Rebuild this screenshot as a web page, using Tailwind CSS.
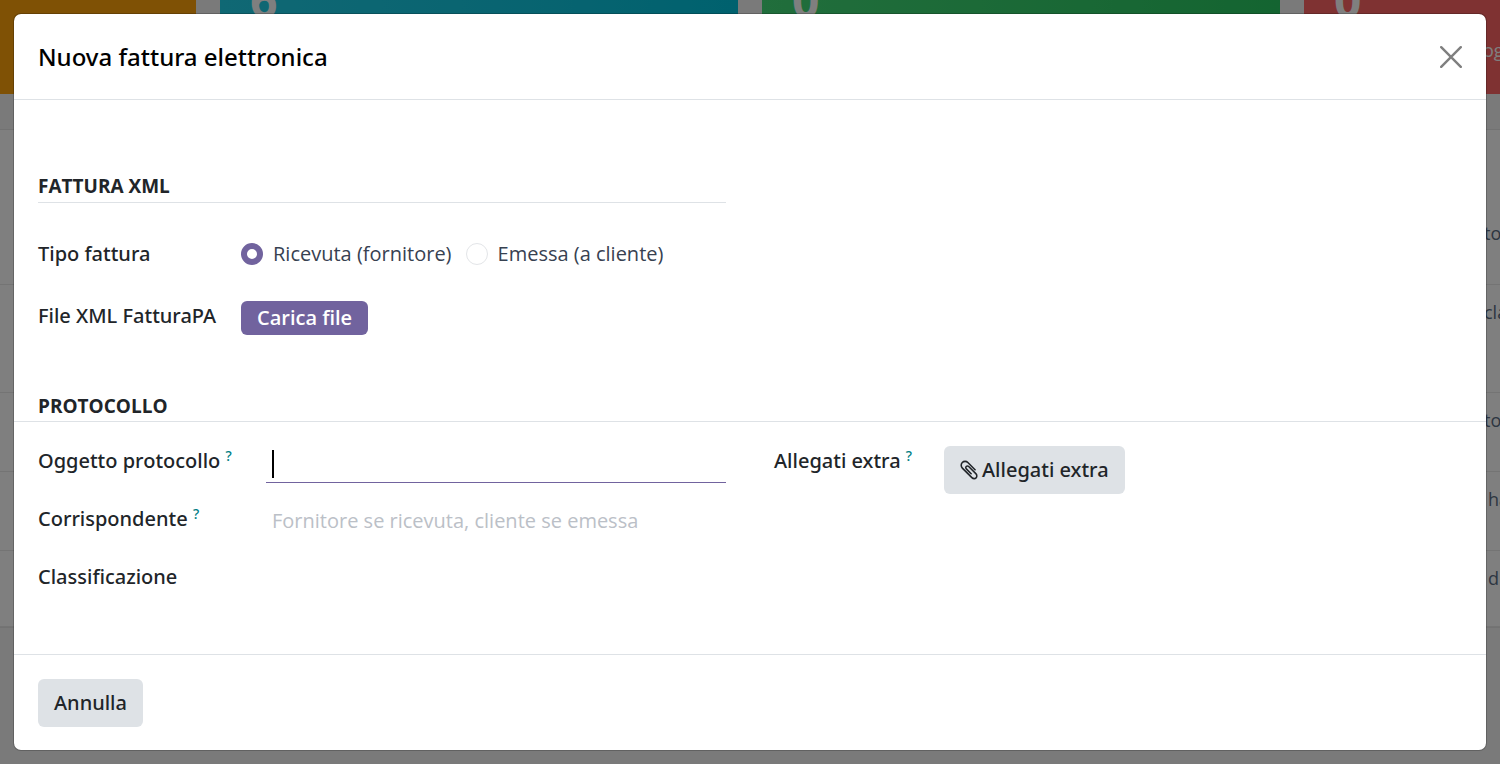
<!DOCTYPE html>
<html lang="it">
<head>
    <meta charset="UTF-8">
    <meta name="viewport" content="width=device-width, initial-scale=1.0">
    <title>Nuova fattura elettronica</title>
    <script src="https://cdn.jsdelivr.net/npm/@tailwindcss/browser@4"></script>
</head>
<body class="min-h-screen overflow-hidden bg-[#f5f5f5] font-['Open_Sans',sans-serif] text-[20px] leading-[30px] text-[#212529]">

    <!-- Dashboard behind the dialog -->
    <div class="absolute inset-0 flex justify-center overflow-hidden bg-[#f5f5f5]" aria-hidden="true">
        <div class="w-[2144px] shrink-0">
            <div class="grid h-[94px] grid-cols-4 gap-6 text-white">
                <div class="bg-[#ffa30a]"></div>
                <div class="bg-linear-to-r from-[#1fd0e8] to-[#00c3dd] px-[30px]">
                    <p class="-mt-[26px] text-[48px] leading-[52px] font-bold">6</p>
                </div>
                <div class="bg-linear-to-r from-[#42dc78] to-[#28c962] px-[30px]">
                    <p class="-mt-[26px] text-[48px] leading-[52px] font-bold">0</p>
                </div>
                <div class="bg-[#ff6464] px-[30px]">
                    <p class="-mt-[26px] text-[48px] leading-[52px] font-bold">0</p>
                    <p class="pt-[10px] pl-[149px] text-[18px] leading-7">oggi</p>
                </div>
            </div>
            <div class="h-9 border-b border-[#e4e4e4]"></div>
            <div class="border-b border-[#e4e4e4] bg-white text-[18px] text-[#5a6c84] *:grid *:grid-cols-[1fr_338px] *:border-b *:border-[#e8e8e8]">
                <div class="h-[155px] pt-[88px]"><span></span><span>to</span></div>
                <div class="h-[108px] pt-3"><span></span><span>cla</span></div>
                <div class="h-[79px] pt-3"><span></span><span>to</span></div>
                <div class="h-[79px] pt-3"><span></span><span class="pl-1">ha</span></div>
                <div class="h-[76px] pt-3"><span></span><span class="pl-1">d</span></div>
            </div>
        </div>
    </div>
    <div class="absolute inset-0 bg-black/50"></div>

    <!-- Dialog -->
    <div role="dialog" aria-labelledby="dialogTitle" class="relative m-[13px] rounded-lg border border-black/20 bg-white bg-clip-padding">
        <div class="flex items-center justify-between border-b border-[#dee2e6] px-6 py-6">
            <h1 id="dialogTitle" class="font-['Noto_Sans','Open_Sans',sans-serif] text-[24px] leading-[37px] font-medium text-black">Nuova fattura elettronica</h1>
            <button type="button" aria-label="Chiudi" class="cursor-pointer text-[#7f7f7f]">
                <svg class="size-[22px]" viewBox="0 0 22 22" fill="none" stroke="currentColor" stroke-width="2.4" stroke-linecap="round">
                    <path d="M1.2 1.2 20.8 20.8M20.8 1.2 1.2 20.8"/>
                </svg>
            </button>
        </div>

        <form id="invoiceForm">
            <div class="grid grid-cols-2 gap-12 px-6 pt-[71px]">
                <section>
                    <h2 class="border-b border-[#dee2e6] text-[19px] leading-[31px] font-bold">FATTURA XML</h2>
                    <div class="mt-9 flex items-center">
                        <span class="w-[203px] font-['Noto_Sans','Open_Sans',sans-serif] font-medium">Tipo fattura</span>
                        <div class="flex items-center gap-[14px] text-[#374151]">
                            <label class="flex items-center gap-[10px]">
                                <input type="radio" name="tipo" checked class="size-[22px] appearance-none rounded-full border border-[#e3e5e8] checked:border-[6px] checked:border-[#71639e]">
                                Ricevuta (fornitore)
                            </label>
                            <label class="flex items-center gap-[10px]">
                                <input type="radio" name="tipo" class="size-[22px] appearance-none rounded-full border border-[#e3e5e8] checked:border-[6px] checked:border-[#71639e]">
                                Emessa (a cliente)
                            </label>
                        </div>
                    </div>
                    <div class="mt-8 flex items-start">
                        <span class="w-[203px] font-['Noto_Sans','Open_Sans',sans-serif] font-medium">File XML FatturaPA</span>
                        <button type="button" class="h-[34px] cursor-pointer rounded-md bg-[#71639e] px-4 font-semibold text-white">Carica file</button>
                    </div>
                </section>
            </div>

            <h2 class="mt-14 border-b border-[#dee2e6] px-6 text-[19px] leading-[30px] font-bold">PROTOCOLLO</h2>
            <div class="grid grid-cols-2 gap-12 px-6 pt-6 pb-[55px]">
                <div class="grid auto-rows-[37px] grid-cols-[228px_1fr] gap-y-[21px]">
                    <label for="oggetto" class="font-['Noto_Sans','Open_Sans',sans-serif] font-medium">Oggetto protocollo <sup class="text-[14px] text-[#017e84]">?</sup></label>
                    <div class="relative">
                        <input id="oggetto" type="text" class="h-[37px] w-full border-b border-[#71639e] px-[6px] pb-1 caret-transparent outline-none">
                        <span class="absolute top-1 left-[6px] h-7 w-[2px] bg-black"></span>
                    </div>
                    <label for="corrispondente" class="font-['Noto_Sans','Open_Sans',sans-serif] font-medium">Corrispondente <sup class="text-[14px] text-[#017e84]">?</sup></label>
                    <input id="corrispondente" type="text" placeholder="Fornitore se ricevuta, cliente se emessa" class="h-[37px] w-full px-[6px] pb-1 outline-none placeholder:text-[#bbc0c7]">
                    <label for="classificazione" class="font-['Noto_Sans','Open_Sans',sans-serif] font-medium">Classificazione</label>
                    <input id="classificazione" type="text" class="h-[37px] w-full px-[6px] pb-1 outline-none">
                </div>
                <div class="flex items-start">
                    <span class="w-[170px] font-['Noto_Sans','Open_Sans',sans-serif] font-medium">Allegati extra <sup class="text-[14px] text-[#017e84]">?</sup></span>
                    <button type="button" class="flex h-12 cursor-pointer items-center gap-1 rounded-md bg-[#dee2e6] px-4 font-['Noto_Sans','Open_Sans',sans-serif] font-medium">
                        <svg class="h-[22px] w-[18px]" viewBox="0 0 1408 1792" fill="currentColor">
                            <path d="M1404 1385q0 117-79 196t-196 79q-135 0-235-100l-777-776q-113-115-113-271 0-159 110-270t269-111q158 0 273 113l605 606q10 10 10 22 0 16-30.5 46.5t-46.5 30.5q-13 0-23-10l-606-607q-79-77-181-77-106 0-179 75t-73 181q0 105 76 181l776 777q63 63 145 63 64 0 106-42t42-106q0-82-63-145l-581-581q-26-24-60-24-29 0-48 19t-19 48q0 32 25 59l410 410q10 10 10 22 0 16-31 47t-47 31q-12 0-22-10l-410-410q-63-61-63-149 0-82 57-139t139-57q88 0 149 63l581 581q100 98 100 235z"/>
                        </svg>
                        Allegati extra
                    </button>
                </div>
            </div>
        </form>

        <div class="border-t border-[#dee2e6] px-6 pt-6 pb-[23px]">
            <button type="button" class="block h-12 cursor-pointer rounded-md bg-[#dee2e6] px-4 font-['Noto_Sans','Open_Sans',sans-serif] font-medium">Annulla</button>
        </div>
    </div>
</body>
</html>
